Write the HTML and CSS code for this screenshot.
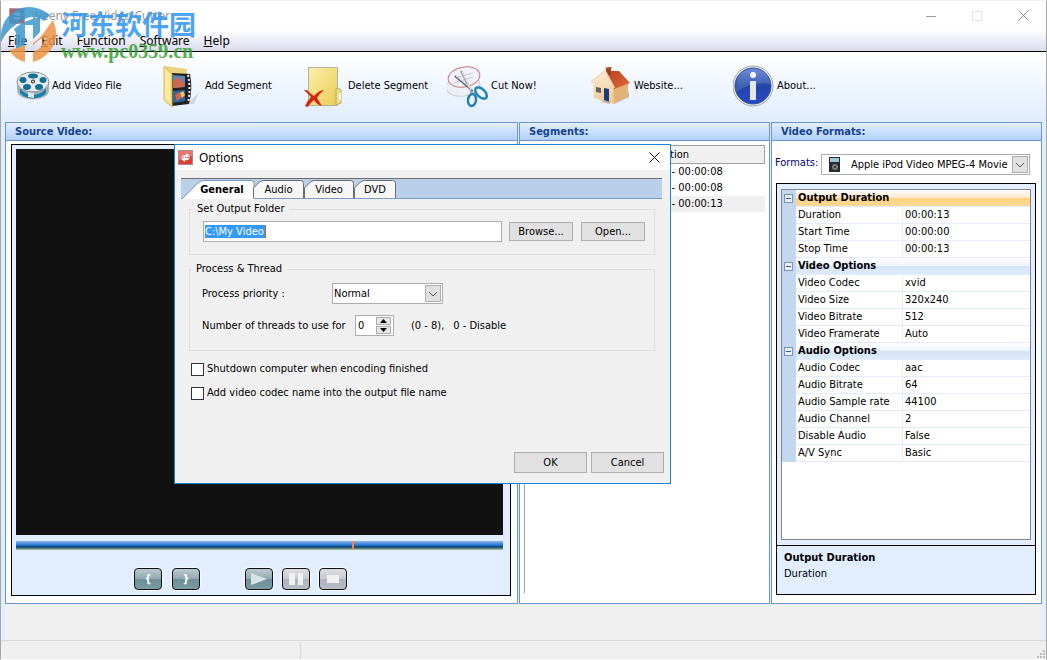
FILE: index.html
```html
<!DOCTYPE html>
<html lang="en">
<head>
  <meta charset="UTF-8" />
  <meta name="viewport" content="width=device-width, initial-scale=1.0"/>
  <title>Weeny Free Video Cutter</title>
  <link rel="stylesheet" href="styles.css">
</head>
<body>

  <div class="window">
    <!-- title bar -->
    <header class="titlebar">
      <svg class="app-icon" width="16" height="16" viewBox="0 0 16 16">
        <rect width="16" height="16" fill="#a9a3ad"/><rect x="1" y="1" width="14" height="14" fill="#b5626c"/>
        <path d="M4 7a4 4 0 0 1 6-2l1-1v4H7l1-1M12 9a4 4 0 0 1-6 2l-1 1V9" fill="#fff"/>
      </svg>
      <h1>Weeny Free Video Cutter</h1>
      <div class="win-buttons">
        <button aria-label="Minimize"><svg width="10" height="10"><path d="M0 5.500h10" stroke="#999"/></svg></button>
        <button aria-label="Maximize" disabled><svg width="10" height="10"><rect x=".5" y=".5" width="9" height="9" fill="none" stroke="#e5e5e5"/></svg></button>
        <button aria-label="Close"><svg width="11" height="11"><path d="M.5.5l10 10M10.500.5l-10 10" stroke="#888"/></svg></button>
      </div>
    </header>

    <nav class="menu">
      <button><u>F</u>ile</button>
      <button><u>E</u>dit</button>
      <button>F<u>u</u>nction</button>
      <button><u>S</u>oftware</button>
      <button><u>H</u>elp</button>
    </nav>

    <!-- toolbar -->
    <div class="toolbar">
      <button class="tool tool-first">
        <svg width="34" height="34" viewBox="0 0 34 34">
          <ellipse cx="17" cy="22" rx="16" ry="9" fill="#d5d9dd"/>
          <path d="M1 13v8c0 12 32 12 32 0v-8z" fill="#a8afb6"/>
          <path d="M4 19c5 9 21 9 26 0v5c-5 7-21 7-26 0z" fill="#1681ad"/>
          <path d="M12 23l6 1v5l-6-1z" fill="#dfe5e9"/>
          <ellipse cx="17" cy="13" rx="16" ry="10" fill="#e6eaed" stroke="#858f98"/>
          <g fill="#146f95"><ellipse cx="17" cy="7" rx="5" ry="2.500"/><ellipse cx="7" cy="11" rx="3.500" ry="3"/><ellipse cx="27" cy="11" rx="3.500" ry="3"/><ellipse cx="11" cy="18" rx="4" ry="3"/><ellipse cx="23" cy="18" rx="4" ry="3"/></g>
          <circle cx="17" cy="12.500" r="2" fill="#333"/><circle cx="17" cy="12.500" r="1" fill="#ddd"/>
        </svg>
        Add Video File
      </button>
      <button class="tool">
        <svg width="42" height="44" viewBox="0 0 42 44">
          <path d="M26 40L38 28l-5 12z" fill="#c4cbd6" opacity=".7"/>
          <path d="M3 2l23 3v15L3 30z" fill="#e9d47c"/>
          <path d="M11 9l18 1q3 15-1 30l-17 2z" fill="#222"/>
          <path d="M12 11l12 1v11l-12 1z" fill="#5a86bd"/><path d="M12 27l12-1v11l-12 2z" fill="#2f659c"/>
          <path d="M12 17l6-4 5 6v4l-11 1z" fill="#cd6950"/><path d="M14 31l4-3 3 5-5 4z" fill="#d76447"/>
          <path d="M19 29l3-2 2 4-3 3z" fill="#ecc461"/>
          <path d="M27 11q3 14 0 28" fill="none" stroke="#f1f1f1" stroke-width="2" stroke-dasharray="2 2"/>
          <path d="M3 2l8 8v33l-8-7z" fill="#f7dd7d" stroke="#d3bc63"/>
          <path d="M4 4l5 7v28l-5-5z" fill="#fbeaa0"/>
        </svg>
        Add Segment
      </button>
      <button class="tool">
        <svg width="42" height="44" viewBox="0 0 42 44">
          <defs><linearGradient id="fold" x1="0" y1="0" x2="1" y2="1"><stop stop-color="#fcefa8"/><stop offset="1" stop-color="#e9cd58"/></linearGradient></defs>
          <path d="M4.500 3.500h29v38h-29z" fill="url(#fold)" stroke="#b0b0a4"/>
          <path d="M33 24l4 2v13l-5 2V25z" fill="#f2df83" stroke="#b9a86a"/><path d="M35 29h2v7h-2z" fill="#fff"/>
          <path d="M0 26q3-1 6 3l4 3q5-6 10-6-5 4-7 8l5 8q-5-1-8-6-4 3-6 7l-3-1q2-5 6-9z" fill="#d32714"/>
        </svg>
        Delete Segment
      </button>
      <button class="tool">
        <svg width="42" height="44" viewBox="0 0 42 44">
          <ellipse cx="16" cy="22" rx="17" ry="10" fill="#edf0f6" stroke="#cdced7" transform="rotate(-8 16 22)"/>
          <ellipse cx="17" cy="13" rx="16" ry="10" fill="#f1f2fa" stroke="#c67b7c" transform="rotate(-10 17 13)"/>
          <path d="M8 14l18-5M7 19l19-6" stroke="#c5c7d2"/>
          <path d="M8 12l18 15" stroke="#59636b" stroke-width="2"/><path d="M14 7l11 22" stroke="#8e979d" stroke-width="2"/>
          <path d="M9 12l17 14M15 8l9 18" stroke="#e7eaec"/>
          <ellipse cx="34" cy="29" rx="7" ry="4" fill="#e9f5fb" stroke="#2085ba" stroke-width="2.500" transform="rotate(43 34 29)"/>
          <ellipse cx="25" cy="36" rx="4" ry="6" fill="#e9f5fb" stroke="#2681ad" stroke-width="2.500" transform="rotate(8 25 36)"/>
        </svg>
        Cut Now!
      </button>
      <button class="tool">
        <svg width="42" height="44" viewBox="0 0 42 44">
          <defs>
            <linearGradient id="roof" x1="0" y1="0" x2="1" y2="1"><stop stop-color="#b8431c"/><stop offset="1" stop-color="#e06a3a"/></linearGradient>
            <linearGradient id="wall" x2="0" y2="1"><stop stop-color="#fdebd0"/><stop offset="1" stop-color="#efc795"/></linearGradient>
          </defs>
          <path d="M24 40l15-7v-5z" fill="#bbb5af"/>
          <path d="M3 18L15 8l9 15v17L4 34z" fill="url(#wall)"/>
          <path d="M23 23l15-5v14l-14 8z" fill="#e2b377"/>
          <path d="M16 7h13l11 12-16 6z" fill="url(#roof)"/>
          <path d="M16 4h5v7l-5-1z" fill="#9c3f1e"/><path d="M15 4l3-1h4l-1 2h-5z" fill="#be582e"/>
          <path d="M1 18L15 7l9 17" fill="none" stroke="#f0dcc0" stroke-width="2"/>
          <path d="M14 24l5 1v13l-5-2z" fill="#173f80"/><path d="M6 23l5 1v5l-5-1z" fill="#61605d"/>
          <path d="M12 36l8 2v2l-8-2z" fill="#c6b39c"/>
        </svg>
        Website...
      </button>
      <button class="tool">
        <svg width="42" height="44" viewBox="0 0 42 44">
          <defs><linearGradient id="info" x2="0" y2="1"><stop stop-color="#5b7bd8"/><stop offset=".5" stop-color="#2347a7"/><stop offset="1" stop-color="#2a48c8"/></linearGradient></defs>
          <circle cx="20" cy="22" r="20" fill="#eee" stroke="#a6a6a6"/><circle cx="20" cy="22" r="18" fill="url(#info)" stroke="#305199"/>
          <path d="M3 23Q4 5 20 5t17 15Q20 17 3 28z" fill="#fff" opacity=".13"/>
          <circle cx="20" cy="11" r="3" fill="#fff"/><path d="M17 17h6v19h-6z" fill="#e5e6e8"/>
        </svg>
        About...
      </button>
    </div>

    <!-- three panels -->
    <main class="panels">
      <section class="panel">
        <h2>Source Video:</h2>
        <div class="player">
          <div class="screen"></div>
          <div class="seek"><span class="seek-mark"></span></div>
          <div class="controls">
            <div class="marks">
              <button class="ctl">{</button>
              <button class="ctl">}</button>
            </div>
            <div class="playback">
              <button class="ctl" aria-label="Play"><svg width="16" height="14"><path d="M0 1l16 6-16 6z" fill="#d8e3e5"/></svg></button>
              <button class="ctl ctl-off" aria-label="Pause"><svg width="16" height="12"><path d="M1 0h6v12H1zM10 0h5v12h-5z" fill="#f0f0f2"/></svg></button>
              <button class="ctl ctl-off" aria-label="Stop"><svg width="12" height="8"><path d="M0 0h12v8H0z" fill="#f0f0f2"/></svg></button>
            </div>
          </div>
        </div>
      </section>

      <section class="panel">
        <h2>Segments:</h2>
        <div class="segments">
          <table>
            <tr><th>No.</th><th>Duration</th></tr>
            <tr><td>1</td><td>00:00:00 - 00:00:08</td></tr>
            <tr><td>2</td><td>00:00:00 - 00:00:08</td></tr>
            <tr class="selected"><td>3</td><td>00:00:00 - 00:00:13</td></tr>
          </table>
        </div>
      </section>

      <section class="panel">
        <h2>Video Formats:</h2>
        <div class="formats">
          <div class="format-row">
            <label for="format">Formats:</label>
            <div class="combo combo-format">
              <select id="format"><option>Apple iPod Video MPEG-4 Movie (*.mp4)</option></select>
              <svg class="ipod" width="11" height="15"><path d="M0 0h11v15H0z" fill="#282b2e"/><path d="M1 1h9v4H1z" fill="#9cc7de"/><circle cx="6" cy="10" r="3" fill="#777c80"/><circle cx="6" cy="10" r="1" fill="#222"/></svg>
              <span class="arrow"><svg width="10" height="6"><path d="M1 1l4 4 4-4" fill="none" stroke="#555"/></svg></span>
            </div>
          </div>

          <div class="inspector">
            <div class="props">
              <table>
                <colgroup><col class="col-gutter"><col class="col-name"><col></colgroup>
                <tr class="group active"><td><button aria-label="Collapse"></button></td><th colspan="2">Output Duration</th></tr>
                <tr><td></td><td>Duration</td><td>00:00:13</td></tr>
                <tr><td></td><td>Start Time</td><td>00:00:00</td></tr>
                <tr><td></td><td>Stop Time</td><td>00:00:13</td></tr>
                <tr class="group"><td><button aria-label="Collapse"></button></td><th colspan="2">Video Options</th></tr>
                <tr><td></td><td>Video Codec</td><td>xvid</td></tr>
                <tr><td></td><td>Video Size</td><td>320x240</td></tr>
                <tr><td></td><td>Video Bitrate</td><td>512</td></tr>
                <tr><td></td><td>Video Framerate</td><td>Auto</td></tr>
                <tr class="group"><td><button aria-label="Collapse"></button></td><th colspan="2">Audio Options</th></tr>
                <tr><td></td><td>Audio Codec</td><td>aac</td></tr>
                <tr><td></td><td>Audio Bitrate</td><td>64</td></tr>
                <tr><td></td><td>Audio Sample rate</td><td>44100</td></tr>
                <tr><td></td><td>Audio Channel</td><td>2</td></tr>
                <tr><td></td><td>Disable Audio</td><td>False</td></tr>
                <tr><td></td><td>A/V Sync</td><td>Basic</td></tr>
              </table>
            </div>
            <div class="prop-help">
              <h3>Output Duration</h3>
              <p>Duration</p>
            </div>
          </div>
        </div>
      </section>
    </main>

    <div class="spacer"></div>
    <footer class="statusbar">
      <div class="status-cell"></div>
      <svg width="9" height="9"><path d="M6 0h2v2H6zM3 3h2v2H3zM6 3h2v2H6zM0 6h2v2H0zM3 6h2v2H3zM6 6h2v2H6z" fill="#bbb"/></svg>
    </footer>
  </div>

  <!-- options dialog -->
  <div class="dialog" role="dialog" aria-labelledby="dialogTitle">
    <div class="dialog-title">
      <svg width="15" height="15" viewBox="0 0 15 15">
        <path d="M0 0h15v15H0z" fill="#a88b8b"/><path d="M1 1h13v13H1z" fill="#dd3e38"/><path d="M1 1h13v5L1 10z" fill="#ec7770"/>
        <path d="M3 8q1-3 5-3V3l4 3-4 2V7Q5 6 3 8zM12 7q-1 4-5 3v2l-4-3 4-2v1q3 1 5-1z" fill="#fff"/>
      </svg>
      <h2 id="dialogTitle">Options</h2>
      <button class="close" aria-label="Close"><svg width="11" height="11"><path d="M.5.5l10 10M10.500.5l-10 10" stroke="#111"/></svg></button>
    </div>

    <div class="tabs">
      <button class="tab tab-on"><svg width="74" height="20"><path d="M0 20L17 3q3-2.500 6-2.500h47q3 0 3 3V20" fill="#fff" stroke="#7a9bc4"/></svg><span>General</span></button>
      <button class="tab"><svg width="51" height="20"><path d="M.5 19.500V8l6-6q2-1.500 4-1.500h37q3 0 3 3v16" fill="#f6f6f6" stroke="#6c6c6c"/></svg><span>Audio</span></button>
      <button class="tab"><svg width="50" height="20"><path d="M.5 19.500V8l6-6q2-1.500 4-1.500h36q3 0 3 3v16" fill="#f6f6f6" stroke="#6c6c6c"/></svg><span>Video</span></button>
      <button class="tab"><svg width="42" height="20"><path d="M.5 19.500V8l6-6q2-1.500 4-1.500h28q3 0 3 3v16" fill="#f6f6f6" stroke="#6c6c6c"/></svg><span>DVD</span></button>
    </div>

    <fieldset class="group-folder">
      <legend>Set Output Folder</legend>
      <div class="folder-field">
        <input type="text" id="folder" aria-label="Output folder" value="C:\My Video" />
      </div>
      <button class="btn">Browse...</button>
      <button class="btn">Open...</button>
    </fieldset>

    <fieldset class="group-process">
      <legend>Process &amp; Thread</legend>
      <div class="row">
        <label for="priority">Process priority :</label>
        <div class="combo combo-priority">
          <select id="priority"><option>Normal</option></select>
          <span class="arrow"><svg width="10" height="6"><path d="M1 1l4 4 4-4" fill="none" stroke="#555"/></svg></span>
        </div>
      </div>
      <div class="row">
        <label class="label-threads" for="threads">Number of threads to use for</label>
        <div class="spin">
          <input type="number" id="threads" value="0" min="0" max="8" />
          <div class="spin-buttons">
            <button aria-label="More"><svg width="7" height="4"><path d="M0 4h7L3.500 0z"/></svg></button>
            <button aria-label="Less"><svg width="7" height="4"><path d="M0 0h7L3.500 4z"/></svg></button>
          </div>
        </div>
        <span>(0 - 8),</span>
        <span class="disable-note">0 - Disable</span>
      </div>
    </fieldset>

    <div class="checks">
      <label><input type="checkbox" />Shutdown computer when encoding finished</label>
      <label><input type="checkbox" />Add video codec name into the output file name</label>
    </div>

    <div class="dialog-actions">
      <button class="btn">OK</button>
      <button class="btn">Cancel</button>
    </div>
  </div>

  <!-- watermark -->
  <div class="watermark">
    <svg width="58" height="58" viewBox="0 0 58 58">
      <path d="M1 37Q-1 14 18 4q17-6 32 6l-6 6q-8-6-17-3Q8 22 1 37z" fill="#3d98cd"/>
      <path d="M14 24q10-9 26-12v15l-7 7V20h-8v22l-9 4V28z" fill="#3d98cd"/>
      <path d="M9 45q7-1 16-5v17q-11-3-16-12z" fill="#ed9443"/>
      <path d="M33 38q9-6 14-15l6-8q7 16-1 28-7 11-19 14V47q10-3 12-14-6 0-12 8z" fill="#ed9443"/>
    </svg>
    <div>
      <p class="mark-name" lang="zh">河东软件园</p>
      <p class="mark-url">www.pc0359.cn</p>
    </div>
  </div>

</body>
</html>
```
FILE: styles.css
```css
* {
  box-sizing: border-box;
}

body {
  margin: 0;
  background: #f0f0f0;
  font-family: "DejaVu Sans Condensed", "Noto Sans", sans-serif;
  font-size: 11px;
  line-height: 16px;
  color: #000;
}

h1, h2, h3, p {
  margin: 0;
}

button, input, select {
  font: inherit;
  color: inherit;
  margin: 0;
}

button {
  border: none;
  background: none;
  padding: 0;
}

svg {
  display: block;
  flex: none;
}

table {
  width: 100%;
  border-collapse: separate;
  border-spacing: 0;
  table-layout: fixed;
}

td, th {
  padding: 0;
  text-align: left;
  white-space: nowrap;
}

/* main window */
.window {
  min-height: 100vh;
  display: flex;
  flex-direction: column;
  background: #e2eeff;
  border: 1px solid #a6a6a6;
  border-top-color: #f0f0f0;
  border-bottom-color: #fafafa;
}

.titlebar {
  display: flex;
  align-items: center;
  height: 29px;
  padding-left: 8px;
  background: #fff;
}

.titlebar h1 {
  flex: 1;
  margin-left: 6px;
  font-family: "Noto Sans", sans-serif;
  font-size: 12px;
  font-weight: normal;
  color: #999;
}

.win-buttons {
  display: flex;
}

.win-buttons button {
  width: 46px;
  height: 28px;
  display: flex;
  align-items: center;
  justify-content: center;
}

.menu {
  display: flex;
  gap: 14px;
  height: 22px;
  padding: 0 7px;
  background: linear-gradient(#fff, #d9dbee);
  border-bottom: 1px solid #000;
  font-family: "Noto Sans", sans-serif;
  font-size: 12px;
}

.toolbar {
  display: flex;
  height: 65px;
  padding: 2px 0 0 15px;
  background: linear-gradient(#fff, #e2eeff);
}

.tool {
  display: flex;
  align-items: center;
  gap: 2px;
  width: 143px;
  white-space: nowrap;
}

.tool-first {
  width: 145px;
}

/* panels */
.panels {
  flex: 1;
  display: grid;
  grid-template-columns: minmax(0, 1fr) 251px 271px;
  gap: 1px;
  padding: 5px 4px 0;
}

.panel {
  display: flex;
  flex-direction: column;
  background: #fff;
  border: 1px solid #6b95cf;
}

.panel h2 {
  height: 18px;
  padding-left: 9px;
  line-height: 18px;
  font-size: 11px;
  color: #15428b;
  background: linear-gradient(#e3effe, #b0d1fb);
  border-bottom: 1px solid #6b95cf;
}

.player {
  flex: 1;
  display: flex;
  flex-direction: column;
  margin: 3px 6px 7px 5px;
  padding: 4px 7px 5px 4px;
  background: #e2eeff;
  border: 1px solid #000;
}

.screen {
  flex: 1;
  background: #111;
}

.seek {
  position: relative;
  height: 9px;
  margin: 6px 0 18px;
  background: linear-gradient(#8db9ec, #1d6ccb 50%, #0b4f8b 60%, #2c5a5c 75%, #b8cfc9);
}

.seek-mark {
  position: absolute;
  top: 0;
  left: 69%;
  width: 2px;
  height: 9px;
  background: #ff7f3f;
}

.controls {
  display: flex;
  gap: 45px;
  padding-left: 118px;
}

.marks {
  display: flex;
  gap: 10px;
}

.playback {
  display: flex;
  gap: 9px;
}

.ctl {
  display: flex;
  align-items: center;
  justify-content: center;
  width: 28px;
  height: 22px;
  border: 1px solid #111;
  border-radius: 4px;
  background: linear-gradient(#b9cacf, #92a9af 50%, #6d8f98 50%, #7b9aa1);
  box-shadow: 0 0 0 1px #f6faff;
  color: #fff;
  font-weight: bold;
}

.ctl-off {
  background: linear-gradient(#dcdee2, #c7cad0 50%, #aeb2bb 50%, #b9bdc5);
}

.segments {
  flex: 1;
  margin: 4px 4px 10px;
  border-left: 1px solid #a0a0a0;
  border-top: 1px solid #a0a0a0;
}

.segments table {
  width: 240px;
}

.segments th {
  height: 18px;
  padding-left: 24px;
  font-weight: normal;
  background: #f0f0f0;
  border-right: 1px solid #a0a0a0;
  border-bottom: 1px solid #a0a0a0;
}

.segments th:first-child {
  width: 97px;
}

.segments td {
  height: 16px;
  padding-left: 2px;
}

.selected {
  background: #f0f0f0;
}

/* formats panel */
.formats {
  flex: 1;
  display: flex;
  flex-direction: column;
  padding: 13px 5px 8px 4px;
}

.format-row {
  display: flex;
  justify-content: space-between;
  padding-right: 6px;
  margin-bottom: 8px;
  color: #00007f;
}

.format-row label {
  margin-left: -1px;
  line-height: 18px;
}

.combo {
  position: relative;
  height: 21px;
}

.combo select {
  width: 100%;
  height: 21px;
  padding: 0 18px 0 1px;
  appearance: none;
  border: 1px solid #abadb3;
  border-radius: 0;
  background: #fff;
  color: #000;
}

.combo-format {
  width: 209px;
}

.combo-format select {
  padding-left: 29px;
}

.combo-priority {
  width: 111px;
}

.arrow {
  position: absolute;
  top: 2px;
  right: 2px;
  width: 16px;
  height: 17px;
  display: flex;
  align-items: center;
  justify-content: center;
  background: #e1e1e1;
  border: 1px solid #adadad;
  pointer-events: none;
}

.ipod {
  position: absolute;
  top: 3px;
  left: 8px;
}

.inspector {
  flex: 1;
  display: flex;
  flex-direction: column;
  background: #e2eeff;
  border: 1px solid #000;
}

.props {
  flex: 1;
  margin: 5px 4px;
  background: #fff;
  border: 1px solid #808591;
}

.col-gutter {
  width: 14px;
}

.col-name {
  width: 106px;
}

.props td, .props th {
  height: 17px;
  padding-left: 2px;
  border-bottom: 1px solid #e2eeff;
}

.props td:first-child {
  background: #c3d8ef;
  border-bottom-color: #c3d8ef;
}

.props td:nth-child(3) {
  border-left: 1px solid #e2eeff;
}

.props th {
  background: linear-gradient(#fff, #eef4fc 50%, #d4e4f7 50%, #dfeafa);
}

.props .active th {
  background: linear-gradient(#fff, #fbe6cb 50%, #ffd27e 50%, #ffd995);
}

.props button {
  display: block;
  width: 9px;
  height: 9px;
  border: 1px solid #7d93b5;
  background: linear-gradient(#3f5c85, #3f5c85) center / 5px 1px no-repeat #e8effa;
}

.prop-help {
  height: 49px;
  padding: 4px 7px;
  border-top: 1px solid #000;
}

.prop-help h3 {
  font-size: 11px;
}

.spacer {
  height: 36px;
  margin: 0 4px;
  background: #f0f0f0;
}

.statusbar {
  display: flex;
  align-items: flex-end;
  justify-content: space-between;
  height: 19px;
  background: #f0f0f0;
  border-top: 1px solid #d7d7d7;
}

.status-cell {
  width: 300px;
  height: 17px;
  border-right: 1px solid #d7d7d7;
}

/* options dialog */
.dialog {
  position: absolute;
  top: 144px;
  left: 174px;
  width: 497px;
  background: #f0f0f0;
  border: 1px solid #1883d7;
}

.dialog-title {
  display: flex;
  align-items: center;
  height: 25px;
  padding: 0 10px 0 3px;
  background: #fff;
}

.dialog-title h2 {
  flex: 1;
  margin-left: 6px;
  font-family: "Noto Sans", sans-serif;
  font-size: 12px;
  font-weight: normal;
}

.tabs {
  display: flex;
  align-items: flex-end;
  height: 21px;
  margin: 8px 8px 0 6px;
  background: #bad0ea;
  border-top: 1px solid #6e6e6e;
  border-bottom: 1px solid #7a9bc4;
}

.tab {
  position: relative;
  height: 18px;
}

.tab svg {
  height: 18px;
}

.tab span {
  position: absolute;
  inset: 2px 0 0;
}

.tab-on {
  height: 19px;
  margin-right: -2px;
  margin-bottom: -1px;
}

.tab-on svg {
  height: 19px;
}

.tab-on span {
  left: 8px;
  font-weight: bold;
}

fieldset {
  min-width: 0;
  margin: 0 15px 0 14px;
  padding: 0;
  border: 1px solid #dcdcdc;
}

legend {
  margin-left: -11px;
  padding: 0 5px;
}

.group-folder {
  display: flex;
  height: 54px;
  margin-top: 2px;
  padding: 4px 9px 0 13px;
}

.folder-field {
  flex: 1;
  height: 21px;
  border: 1px solid #abadb3;
  background: #fff;
}

.folder-field input {
  display: block;
  width: 61px;
  height: 13px;
  margin: 3px 1px;
  padding: 0;
  border: none;
  border-right: 1px solid #c86400;
  outline: none;
  background: #3399ff;
  color: #fff;
}

.btn {
  height: 21px;
  background: #e1e1e1;
  border: 1px solid #adadad;
}

.group-folder .btn {
  width: 64px;
  height: 19px;
  margin: 1px 0 0 7px;
}

.group-folder .btn + .btn {
  margin-left: 8px;
}

.group-process {
  height: 90px;
  margin-top: 6px;
  padding: 6px 12px 0;
}

.row {
  display: flex;
  align-items: center;
  margin-bottom: 11px;
}

.row label {
  width: 130px;
}

.row .label-threads {
  width: 153px;
}

.spin {
  display: flex;
  width: 39px;
  height: 21px;
  margin-right: 17px;
  padding: 1px 2px;
  border: 1px solid #abadb3;
  background: #fff;
}

.spin input {
  width: 18px;
  padding: 0;
  border: none;
  outline: none;
  appearance: textfield;
}

.spin input::-webkit-inner-spin-button {
  appearance: none;
  margin: 0;
}

.spin-buttons {
  display: flex;
  flex-direction: column;
  gap: 1px;
}

.spin-buttons button {
  flex: 1;
  display: flex;
  align-items: center;
  justify-content: center;
  width: 15px;
  background: #e6e6e6;
  border: 1px solid #adadad;
}

.disable-note {
  margin-left: 9px;
}

.checks {
  display: flex;
  flex-direction: column;
  gap: 8px;
  padding: 10px 16px 0;
}

.checks label {
  display: flex;
  align-items: center;
  gap: 3px;
}

.checks input {
  width: 13px;
  height: 13px;
  margin: 0;
  appearance: none;
  border: 1px solid #333;
  background: #fff;
}

.dialog-actions {
  display: flex;
  justify-content: flex-end;
  gap: 4px;
  padding: 51px 6px 10px;
}

.dialog-actions .btn {
  width: 73px;
}

/* watermark */
.watermark {
  position: absolute;
  top: 5px;
  left: 0;
  display: flex;
  gap: 3px;
  opacity: .85;
  pointer-events: none;
}

.mark-name {
  padding-top: 4px;
  font-family: "Noto Sans CJK SC", sans-serif;
  font-size: 27px;
  line-height: 30px;
  font-weight: bold;
  color: #2f95ee;
}

.mark-url {
  padding-top: 2px;
  font-family: "Liberation Serif", serif;
  font-size: 20px;
  line-height: 20px;
  font-weight: bold;
  color: #36a02e;
}
```
